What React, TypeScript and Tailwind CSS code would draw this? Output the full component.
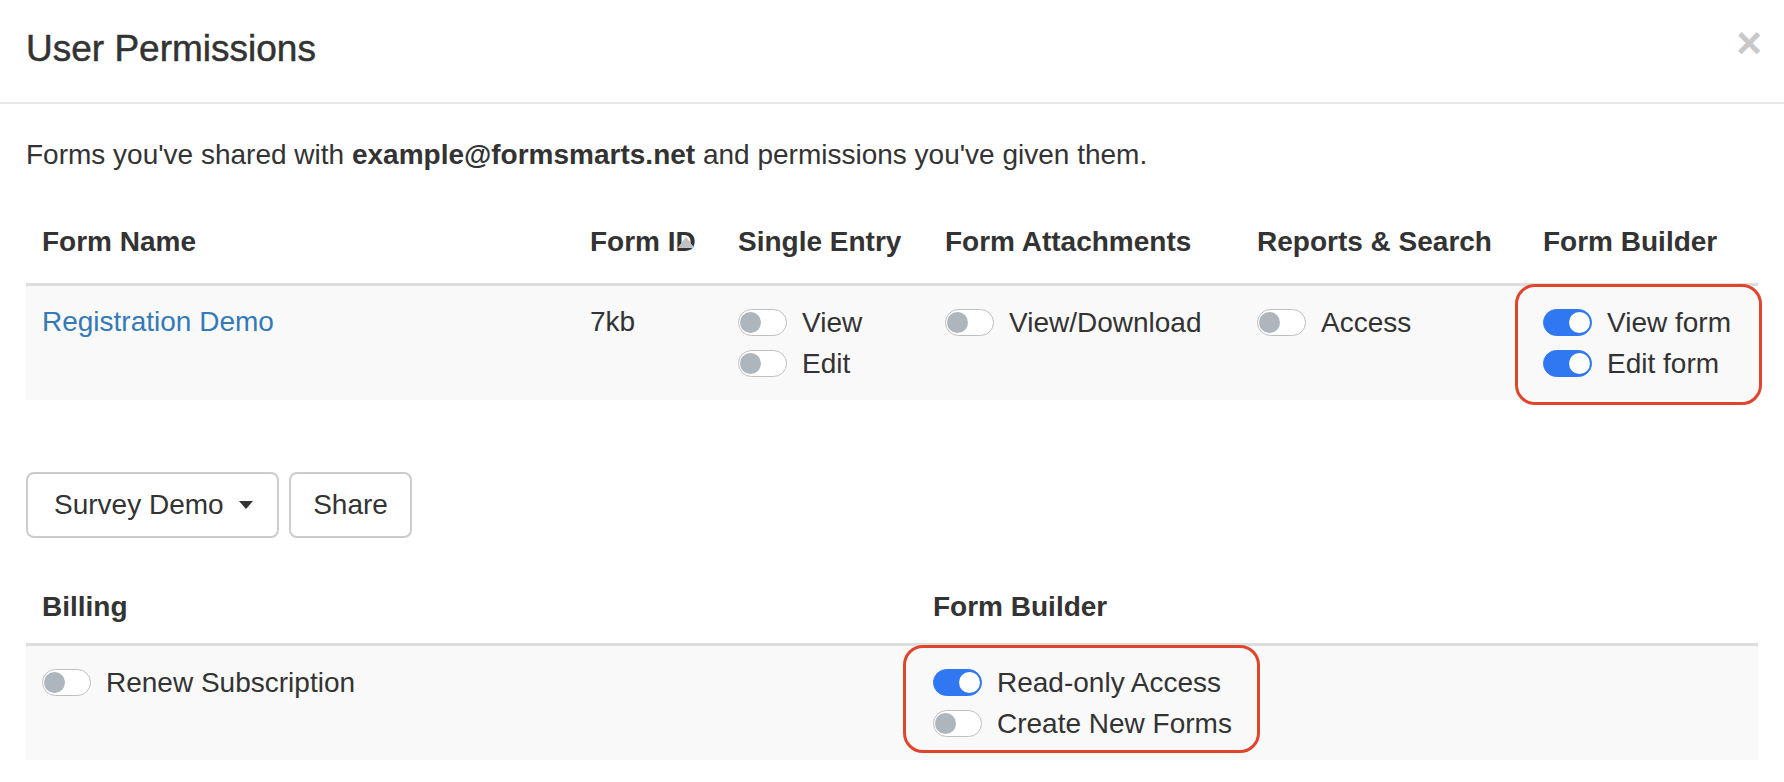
import React from "react";

// User permissions modal: forms shared with a user and the switches granting each permission.
// The red outlines are annotation boxes drawn over the Form Builder cells.

function Toggle({ on = false }: { on?: boolean }) {
  return (
    <span
      className={`flex h-[27px] w-[49px] shrink-0 items-center rounded-full border-[1.5px] px-[1px] ${
        on ? "justify-end border-[#2f78f2] bg-[#2f78f2]" : "justify-start border-[#bfbfbf] bg-white"
      }`}
    >
      <span className={`size-[21px] rounded-full ${on ? "bg-white" : "bg-[#adb5bd]"}`} />
    </span>
  );
}

function Switch({ label, on }: { label: string; on?: boolean }) {
  return (
    <div className="flex h-[41px] items-center gap-[15px]">
      <Toggle on={on} />
      <span className="whitespace-nowrap">{label}</span>
    </div>
  );
}

function Marker({ className }: { className: string }) {
  return <div className={`pointer-events-none absolute rounded-[20px] border-[3px] border-[#e0452b] ${className}`} />;
}

export default function App() {
  return (
    <div className="min-h-[782px] w-[1784px] bg-white font-['Liberation_Sans',Arial,sans-serif] text-[28px] leading-[40px] text-[#333333]">
      <div className="flex h-[104px] items-start justify-between border-b-2 border-[#e5e5e5] pl-[26px] pr-[22px] pt-[28px]">
        <h4 className="text-[37px] leading-[41px] font-normal [-webkit-text-stroke:0.5px_#333333]">User Permissions</h4>
        <span className="mt-[-7px] text-[44px] leading-none font-bold text-[#c8c8c8]">×</span>
      </div>

      <div className="px-[26px] pt-[31px]">
        <p>
          Forms you've shared with <b className="font-bold">example@formsmarts.net</b> and permissions you've given them.
        </p>

        <table className="mt-[31px] w-full table-fixed border-collapse">
          <thead>
            <tr className="border-b-[3px] border-[#dddddd] text-left">
              <th className="w-[548px] px-4 pt-4 pb-[21px] font-bold">Form Name</th>
              <th className="w-[148px] px-4 pt-4 pb-[21px] font-bold">
                <span className="relative inline-block whitespace-nowrap">
                  Form ID
                  <svg className="absolute left-[88px] top-[15px]" width="16" height="11" viewBox="0 0 16 11">
                    <path d="M8 0.5 L15.5 10.5 L0.5 10.5 Z" fill="#c2c2c2" stroke="#c2c2c2" strokeLinejoin="round" />
                  </svg>
                </span>
              </th>
              <th className="w-[207px] px-4 pt-4 pb-[21px] font-bold whitespace-nowrap">Single Entry</th>
              <th className="w-[312px] px-4 pt-4 pb-[21px] font-bold whitespace-nowrap">Form Attachments</th>
              <th className="w-[286px] px-4 pt-4 pb-[21px] font-bold whitespace-nowrap">Reports &amp; Search</th>
              <th className="px-4 pt-4 pb-[21px] font-bold whitespace-nowrap">Form Builder</th>
            </tr>
          </thead>
          <tbody>
            <tr className="bg-[#f9f9f9]">
              <td className="px-4 py-4 align-top">
                <a className="text-[#337ab7]">Registration Demo</a>
              </td>
              <td className="px-4 py-4 align-top">7kb</td>
              <td className="px-4 py-4 align-top">
                <Switch label="View" />
                <Switch label="Edit" />
              </td>
              <td className="px-4 py-4 align-top">
                <Switch label="View/Download" />
              </td>
              <td className="px-4 py-4 align-top">
                <Switch label="Access" />
              </td>
              <td className="relative px-4 py-4 align-top">
                <Switch label="View form" on />
                <Switch label="Edit form" on />
                <Marker className="left-[-12px] top-[-2px] h-[121px] w-[247px]" />
              </td>
            </tr>
          </tbody>
        </table>

        <div className="mt-[72px] flex gap-[10px]">
          <button className="flex h-[66px] w-[253px] items-center rounded-[8px] border-2 border-[#cccccc] bg-white pl-[26px] pr-[24px]">
            <span>Survey Demo</span>
            <span className="ml-auto h-0 w-0 border-x-[7px] border-t-[8px] border-x-transparent border-t-[#333333]" />
          </button>
          <button className="flex h-[66px] w-[123px] items-center justify-center rounded-[8px] border-2 border-[#cccccc] bg-white">
            Share
          </button>
        </div>

        <table className="mt-[33px] w-full table-fixed border-collapse">
          <thead>
            <tr className="border-b-[3px] border-[#dddddd] text-left">
              <th className="w-[891px] px-4 py-4 font-bold">Billing</th>
              <th className="px-4 py-4 font-bold">Form Builder</th>
            </tr>
          </thead>
          <tbody>
            <tr className="bg-[#f9f9f9]">
              <td className="px-4 py-4 align-top">
                <Switch label="Renew Subscription" />
              </td>
              <td className="relative px-4 py-4 align-top">
                <Switch label="Read-only Access" on />
                <Switch label="Create New Forms" />
                <Marker className="left-[-14px] top-[-1px] h-[108px] w-[357px]" />
              </td>
            </tr>
          </tbody>
        </table>
      </div>
    </div>
  );
}
